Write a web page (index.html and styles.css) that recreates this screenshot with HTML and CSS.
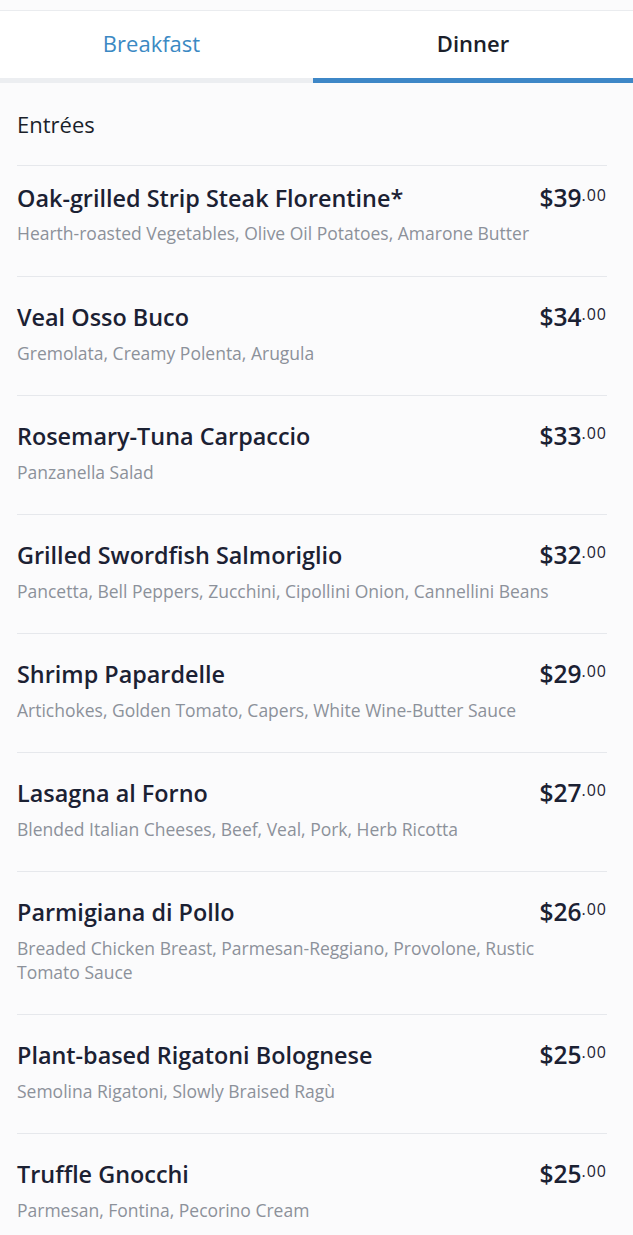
FILE: index.html
```html
<!DOCTYPE html>
<html lang="en">
<head>
  <meta charset="UTF-8">
  <meta name="viewport" content="width=device-width, initial-scale=1.0">
  <title>Dinner Menu</title>
  <link rel="stylesheet" href="styles.css">
</head>
<body>
  <!-- Meal tabs -->
  <nav class="tabs">
    <div class="tab">Breakfast</div>
    <div class="tab active">Dinner</div>
  </nav>

  <main class="menu">
    <h2 class="section-title">Entrées</h2>

    <ul class="items">
      <li class="item">
        <div class="item-head">
          <h3 class="item-name">Oak-grilled Strip Steak Florentine*</h3>
          <div class="price">$39<span class="cents">.00</span></div>
        </div>
        <p class="item-desc">Hearth-roasted Vegetables, Olive Oil Potatoes, Amarone Butter</p>
      </li>
      <li class="item">
        <div class="item-head">
          <h3 class="item-name">Veal Osso Buco</h3>
          <div class="price">$34<span class="cents">.00</span></div>
        </div>
        <p class="item-desc">Gremolata, Creamy Polenta, Arugula</p>
      </li>
      <li class="item">
        <div class="item-head">
          <h3 class="item-name">Rosemary-Tuna Carpaccio</h3>
          <div class="price">$33<span class="cents">.00</span></div>
        </div>
        <p class="item-desc">Panzanella Salad</p>
      </li>
      <li class="item">
        <div class="item-head">
          <h3 class="item-name">Grilled Swordfish Salmoriglio</h3>
          <div class="price">$32<span class="cents">.00</span></div>
        </div>
        <p class="item-desc">Pancetta, Bell Peppers, Zucchini, Cipollini Onion, Cannellini Beans</p>
      </li>
      <li class="item">
        <div class="item-head">
          <h3 class="item-name">Shrimp Papardelle</h3>
          <div class="price">$29<span class="cents">.00</span></div>
        </div>
        <p class="item-desc">Artichokes, Golden Tomato, Capers, White Wine-Butter Sauce</p>
      </li>
      <li class="item">
        <div class="item-head">
          <h3 class="item-name">Lasagna al Forno</h3>
          <div class="price">$27<span class="cents">.00</span></div>
        </div>
        <p class="item-desc">Blended Italian Cheeses, Beef, Veal, Pork, Herb Ricotta</p>
      </li>
      <li class="item">
        <div class="item-head">
          <h3 class="item-name">Parmigiana di Pollo</h3>
          <div class="price">$26<span class="cents">.00</span></div>
        </div>
        <p class="item-desc">Breaded Chicken Breast, Parmesan-Reggiano, Provolone, Rustic Tomato Sauce</p>
      </li>
      <li class="item">
        <div class="item-head">
          <h3 class="item-name">Plant-based Rigatoni Bolognese</h3>
          <div class="price">$25<span class="cents">.00</span></div>
        </div>
        <p class="item-desc">Semolina Rigatoni, Slowly Braised Ragù</p>
      </li>
      <li class="item">
        <div class="item-head">
          <h3 class="item-name">Truffle Gnocchi</h3>
          <div class="price">$25<span class="cents">.00</span></div>
        </div>
        <p class="item-desc">Parmesan, Fontina, Pecorino Cream</p>
      </li>
    </ul>
  </main>
</body>
</html>
```

FILE: styles.css
```css
body {
  margin: 0;
  font-family: "Open Sans", "Noto Sans", sans-serif;
  background-color: #fbfbfc;
  color: #1b2133;
}
.tabs {
  display: grid;
  grid-template-columns: 313px 1fr;
  margin-top: 10px;
  border-top: 1px solid #eaecef;
  background-color: #fff;
}
.tab {
  height: 64px;
  padding-bottom: 3px;
  display: flex;
  align-items: center;
  justify-content: center;
  font-size: 22px;
  color: #3b89c3;
  border-bottom: 5px solid #eceef1;
}
.tab:first-child {
  padding-right: 10px;
}
.tab.active {
  color: #1b1f2a;
  font-weight: 600;
  border-bottom-color: #3e87c7;
}
.menu {
  padding: 0 26px 0 17px;
}
.section-title {
  margin: 27px 0 27px;
  font-size: 22px;
  font-weight: 400;
  line-height: 28px;
  color: #1b1f2a;
}
.items {
  list-style: none;
  margin: 0;
  padding: 0;
}
.item {
  border-top: 1px solid #e6e8ec;
  padding: 26px 0 30px;
}
.item:first-child {
  padding: 18px 0 31px;
}
.item-head {
  display: flex;
  justify-content: space-between;
  align-items: flex-start;
}
.item-name {
  margin: 0;
  font-size: 23.4px;
  font-weight: 600;
  line-height: 28px;
}
.item-desc {
  max-width: 545px;
  margin: 10px 0 0;
  font-size: 17.5px;
  line-height: 24px;
  color: #8c919a;
}
.item:first-child .item-desc {
  margin-top: 9px;
}
.price {
  font-size: 24.5px;
  font-weight: 600;
  line-height: 28px;
  white-space: nowrap;
}
.cents {
  font-size: 16px;
  font-weight: 400;
  letter-spacing: 1px;
  vertical-align: top;
  line-height: 22px;
}
```
